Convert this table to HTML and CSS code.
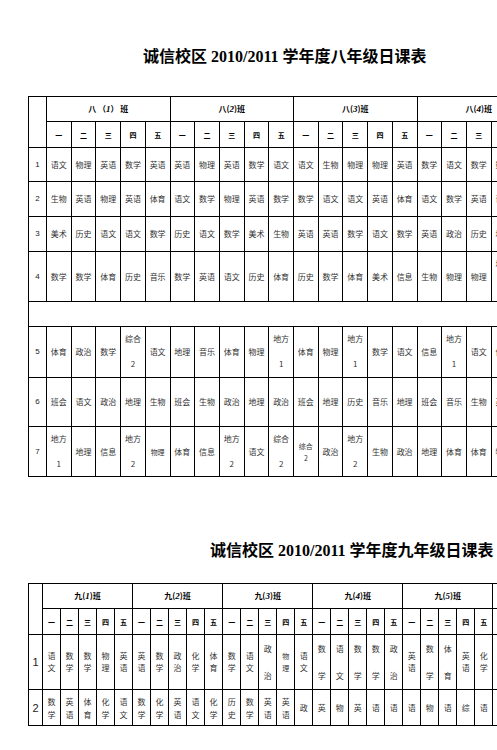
FILE: index.html
```html
<!DOCTYPE html>
<html lang="zh-CN">
<head>
<meta charset="utf-8">
<title>诚信校区日课表</title>
<link rel="stylesheet" href="styles.css">
</head>
<body>
<div class="page">
  <div class="title title-8">诚信校区 2010/2011 学年度八年级日课表</div>
  <table class="t8">
    <colgroup>
      <col class="c-num">
      <col class="c8"><col class="c8"><col class="c8"><col class="c8"><col class="c8">
      <col class="c8"><col class="c8"><col class="c8"><col class="c8"><col class="c8">
      <col class="c8"><col class="c8"><col class="c8"><col class="c8"><col class="c8">
      <col class="c8"><col class="c8"><col class="c8"><col class="c8"><col class="c8">
    </colgroup>
    <tr class="h-a">
      <td rowspan="2"></td>
      <td colspan="5" class="cls">八 （<i>1</i>） 班</td>
      <td colspan="5" class="cls">八(<i>2</i>)班</td>
      <td colspan="5" class="cls">八(<i>3</i>)班</td>
      <td colspan="5" class="cls">八(<i>4</i>)班</td>
    </tr>
    <tr class="h-b">
      <td class="day">一</td><td class="day">二</td><td class="day">三</td><td class="day">四</td><td class="day">五</td>
      <td class="day">一</td><td class="day">二</td><td class="day">三</td><td class="day">四</td><td class="day">五</td>
      <td class="day">一</td><td class="day">二</td><td class="day">三</td><td class="day">四</td><td class="day">五</td>
      <td class="day">一</td><td class="day">二</td><td class="day">三</td><td class="day">四</td><td class="day">五</td>
    </tr>
    <tr class="r34">
      <td class="no">1</td>
      <td>语文</td><td>物理</td><td>英语</td><td>数学</td><td>英语</td>
      <td>英语</td><td>物理</td><td>英语</td><td>数学</td><td>语文</td>
      <td>语文</td><td>生物</td><td>物理</td><td>物理</td><td>英语</td>
      <td>数学</td><td>语文</td><td>数学</td><td>数学</td><td>英语</td>
    </tr>
    <tr class="r35">
      <td class="no">2</td>
      <td>生物</td><td>英语</td><td>物理</td><td>英语</td><td>体育</td>
      <td>语文</td><td>数学</td><td>物理</td><td>英语</td><td>数学</td>
      <td>数学</td><td>语文</td><td>语文</td><td>英语</td><td>体育</td>
      <td>语文</td><td>数学</td><td>英语</td><td>语文</td><td>物理</td>
    </tr>
    <tr class="r35">
      <td class="no">3</td>
      <td>美术</td><td>历史</td><td>语文</td><td>语文</td><td>数学</td>
      <td>历史</td><td>语文</td><td>数学</td><td>美术</td><td>生物</td>
      <td>英语</td><td>英语</td><td>数学</td><td>语文</td><td>数学</td>
      <td>英语</td><td>政治</td><td>历史</td><td>地理</td><td>数学</td>
    </tr>
    <tr class="r50">
      <td class="no">4</td>
      <td>数学</td><td>数学</td><td>体育</td><td>历史</td><td>音乐</td>
      <td>数学</td><td>英语</td><td>语文</td><td>历史</td><td>体育</td>
      <td>历史</td><td>数学</td><td>体育</td><td>美术</td><td>信息</td>
      <td>生物</td><td>物理</td><td>物理</td><td class="two">地方<br>2</td><td>英语</td>
    </tr>
    <tr class="r25">
      <td colspan="21"></td>
    </tr>
    <tr class="r50">
      <td class="no">5</td>
      <td>体育</td><td>政治</td><td>数学</td><td class="two">综合<br>2</td><td>语文</td>
      <td>地理</td><td>音乐</td><td>体育</td><td>物理</td><td class="two">地方<br>1</td>
      <td>体育</td><td>物理</td><td class="two">地方<br>1</td><td>数学</td><td>语文</td>
      <td>信息</td><td class="two">地方<br>1</td><td>语文</td><td>信息</td><td>数学</td>
    </tr>
    <tr class="r49">
      <td class="no">6</td>
      <td>班会</td><td>语文</td><td>政治</td><td>地理</td><td>生物</td>
      <td>班会</td><td>生物</td><td>政治</td><td>地理</td><td>政治</td>
      <td>班会</td><td>地理</td><td>历史</td><td>音乐</td><td>地理</td>
      <td>班会</td><td>音乐</td><td>生物</td><td>英语</td><td>历史</td>
    </tr>
    <tr class="r50">
      <td class="no">7</td>
      <td class="two">地方<br>1</td><td>地理</td><td>信息</td><td class="two">地方<br>2</td><td class="sm">物理</td>
      <td>体育</td><td>信息</td><td class="two">地方<br>2</td><td>语文</td><td class="two">综合<br>2</td>
      <td class="two-s">综合<br>2</td><td>政治</td><td class="two">地方<br>2</td><td>生物</td><td>政治</td>
      <td>地理</td><td>体育</td><td>体育</td><td>物理</td><td>语文</td>
    </tr>
  </table>

  <div class="title title-9">诚信校区 2010/2011 学年度九年级日课表</div>
  <table class="t9">
    <colgroup>
      <col class="c-num9">
      <col class="c9"><col class="c9"><col class="c9"><col class="c9"><col class="c9">
      <col class="c9"><col class="c9"><col class="c9"><col class="c9"><col class="c9">
      <col class="c9"><col class="c9"><col class="c9"><col class="c9"><col class="c9">
      <col class="c9"><col class="c9"><col class="c9"><col class="c9"><col class="c9">
      <col class="c9"><col class="c9"><col class="c9"><col class="c9"><col class="c9">
      <col class="c9"><col class="c9"><col class="c9"><col class="c9"><col class="c9">
    </colgroup>
    <tr class="h-a">
      <td rowspan="2"></td>
      <td colspan="5" class="cls cls9">九(<i>1</i>)班</td>
      <td colspan="5" class="cls cls9">九(<i>2</i>)班</td>
      <td colspan="5" class="cls cls9">九(<i>3</i>)班</td>
      <td colspan="5" class="cls cls9">九(<i>4</i>)班</td>
      <td colspan="5" class="cls cls9">九(<i>5</i>)班</td>
      <td colspan="5" class="cls cls9">九(<i>6</i>)班</td>
    </tr>
    <tr class="h-b">
      <td class="day">一</td><td class="day">二</td><td class="day">三</td><td class="day">四</td><td class="day">五</td>
      <td class="day">一</td><td class="day">二</td><td class="day">三</td><td class="day">四</td><td class="day">五</td>
      <td class="day">一</td><td class="day">二</td><td class="day">三</td><td class="day">四</td><td class="day">五</td>
      <td class="day">一</td><td class="day">二</td><td class="day">三</td><td class="day">四</td><td class="day">五</td>
      <td class="day">一</td><td class="day">二</td><td class="day">三</td><td class="day">四</td><td class="day">五</td>
      <td class="day">一</td><td class="day">二</td><td class="day">三</td><td class="day">四</td><td class="day">五</td>
    </tr>
    <tr class="r49">
      <td class="no9">1</td>
      <td class="st">语<br>文</td><td class="st">数<br>学</td><td class="st">数<br>学</td><td class="st">物<br>理</td><td class="st">英<br>语</td>
      <td class="st">英<br>语</td><td class="st">数<br>学</td><td class="st">政<br>治</td><td class="st">化<br>学</td><td class="st">体<br>育</td>
      <td class="st">数<br>学</td><td class="st">语<br>文</td><td class="sp">政<br>治</td><td class="st sm">物<br>理</td><td class="st">语<br>文</td>
      <td class="sp">数<br>学</td><td class="sp">语<br>文</td><td class="sp">数<br>学</td><td class="sp">数<br>学</td><td class="sp">政<br>治</td>
      <td class="st">英<br>语</td><td class="sp">数<br>学</td><td class="sp">体<br>育</td><td class="st">英<br>语</td><td class="st">化<br>学</td>
      <td class="st">语<br>文</td><td class="st">数<br>学</td><td class="st">英<br>语</td><td class="st">物<br>理</td><td class="st">化<br>学</td>
    </tr>
    <tr class="r36">
      <td class="no9">2</td>
      <td class="st2">数<br>学</td><td class="st2">英<br>语</td><td class="st2">体<br>育</td><td class="st2">化<br>学</td><td class="st2">语<br>文</td>
      <td class="st2">数<br>学</td><td class="st2">化<br>学</td><td class="st2">英<br>语</td><td class="st2">语<br>文</td><td class="st2">化<br>学</td>
      <td class="st2">历<br>史</td><td class="st2">数<br>学</td><td class="st2">英<br>语</td><td class="st2">英<br>语</td><td>政</td>
      <td>英</td><td>物</td><td>英</td><td>语</td><td>语</td>
      <td>语</td><td>物</td><td>语</td><td>综</td><td>语</td>
      <td>语</td><td>数</td><td>物</td><td>英</td><td>化</td>
    </tr>
  </table>
</div>
</body>
</html>
```

FILE: styles.css
```css
html, body {
  margin: 0;
  padding: 0;
  background: #ffffff;
}

.page {
  width: 497px;
  height: 750px;
  overflow: hidden;
}

.title {
  font-family: "Liberation Serif", "Noto Sans CJK SC", serif;
  font-weight: bold;
  font-size: 16px;
  line-height: 20px;
  color: #000;
  white-space: nowrap;
}

.title-8 {
  margin-top: 47px;
  padding-left: 143px;
}

.title-9 {
  margin-top: 64px;
  padding-left: 210px;
}

table {
  border-collapse: collapse;
  table-layout: fixed;
  margin-left: 28px;
}

.t8 {
  width: 512px;
  margin-top: 29px;
}

.t9 {
  width: 554px;
  margin-top: 22px;
}

.c-num { width: 18px; }
.c8 { width: 24.7px; }
.c-num9 { width: 14px; }
.c9 { width: 18px; }

td {
  border: 1px solid #000;
  padding: 0;
  text-align: center;
  vertical-align: middle;
  font-family: "Noto Sans CJK SC", sans-serif;
  font-size: 8px;
  line-height: 10px;
  color: #333;
  white-space: nowrap;
  overflow: hidden;
}

.h-a { height: 25px; }
.h-b { height: 26px; }
.r25 { height: 25px; }
.r34 { height: 34px; }
.r35 { height: 35px; }
.r36 { height: 36px; }
.r49 { height: 49px; }
.r50 { height: 50px; }

.cls {
  color: #000;
  font-weight: bold;
  font-size: 8px;
}

.cls i {
  font-family: "Liberation Serif", serif;
  font-size: 9px;
}

.day {
  color: #000;
  font-weight: bold;
  font-size: 7px;
}

.no {
  font-family: "Liberation Sans", sans-serif;
  font-size: 8px;
  color: #222;
}

.no9 {
  font-family: "Liberation Sans", sans-serif;
  font-size: 11px;
  color: #222;
}

.two {
  line-height: 24.7px;
}

.two-s {
  font-size: 7px;
  line-height: 12px;
}

.sm {
  font-size: 7px;
}

.st {
  line-height: 12.6px;
}

.sp {
  line-height: 27px;
}

.st2 {
  line-height: 13px;
}
```
